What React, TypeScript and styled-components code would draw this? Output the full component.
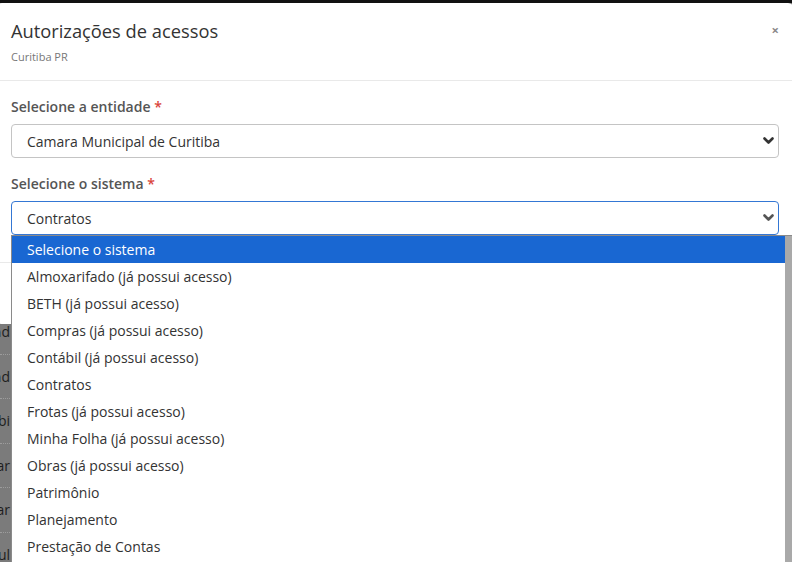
import styled, { createGlobalStyle } from "styled-components";

const sistemas = [
  "Selecione o sistema",
  "Almoxarifado (já possui acesso)",
  "BETH (já possui acesso)",
  "Compras (já possui acesso)",
  "Contábil (já possui acesso)",
  "Contratos",
  "Frotas (já possui acesso)",
  "Minha Folha (já possui acesso)",
  "Obras (já possui acesso)",
  "Patrimônio",
  "Planejamento",
  "Prestação de Contas",
];

const fundo = ["nd", "nd", "bi", "ar", "ar", "ul"];

const GlobalStyle = createGlobalStyle`
  * { box-sizing: border-box; }
  body {
    margin: 0;
    font-family: "Open Sans", "Liberation Sans", sans-serif;
    color: #333;
  }
`;

const Chevron = ({ color = "#333" }: { color?: string }) => (
  <svg width="11" height="8" viewBox="0 0 11 8">
    <polyline
      points="1.5,1.5 5.5,5.5 9.5,1.5"
      fill="none"
      stroke={color}
      strokeWidth="2.6"
      strokeLinecap="round"
      strokeLinejoin="round"
    />
  </svg>
);

const App = () => {
  return (
    <Page>
      <GlobalStyle />
      <TopBar />
      <Behind>
        {fundo.map((t, i) => (
          <BehindRow key={i}>
            <BehindCell>{t}</BehindCell>
          </BehindRow>
        ))}
      </Behind>

      <Modal>
        <Header>
          <HeaderText>
            <Title>Autorizações de acessos</Title>
            <Subtitle>Curitiba PR</Subtitle>
          </HeaderText>
          <Close>×</Close>
        </Header>
        <Body>
          <Group>
            <Label>
              Selecione a entidade <Req>*</Req>
            </Label>
            <Select>
              <span>Camara Municipal de Curitiba</span>
              <Chevron />
            </Select>
          </Group>
          <Group $last>
            <Label>
              Selecione o sistema <Req>*</Req>
            </Label>
            <Select $focused>
              <span>Contratos</span>
              <Chevron color="#555" />
            </Select>
          </Group>
        </Body>
        <Footer>
          <Button>Cancelar</Button>
          <Button $primary>Salvar</Button>
        </Footer>
      </Modal>

      <Options>
        <OptionList>
          {sistemas.map((s, i) => (
            <Option key={s} $active={i === 0}>
              {s}
            </Option>
          ))}
        </OptionList>
        <ScrollTrack />
      </Options>
    </Page>
  );
};

const Page = styled.div`
  position: relative;
  width: 792px;
  height: 562px;
  overflow: hidden;
  background: #7b7b7b;
`;

const TopBar = styled.div`
  height: 3px;
  background: #111;
`;

const Behind = styled.div`
  padding-top: 307px;
`;

const BehindRow = styled.div`
  height: 44.5px;
  display: flex;
  align-items: center;
  border-bottom: 1px dotted #9c9c9c;
`;

/* the table cell ends just left of the open option list */
const BehindCell = styled.div`
  width: 10px;
  display: flex;
  justify-content: flex-end;
  font-size: 14px;
  color: #1e1e1e;
  white-space: nowrap;
`;

const Modal = styled.div`
  position: absolute;
  top: 3px;
  left: -4px;
  width: 798px;
  background: #fff;
  border-radius: 6px;
`;

const Header = styled.div`
  display: flex;
  justify-content: space-between;
  align-items: flex-start;
  padding: 15px;
  border-bottom: 1px solid #e9e9e9;
`;

const HeaderText = styled.div`
  display: flex;
  flex-direction: column;
  gap: 5px;
`;

const Title = styled.h4`
  margin: 0;
  font-size: 18.3px;
  font-weight: 400;
  line-height: 26px;
  color: #333;
`;

const Subtitle = styled.small`
  font-size: 11px;
  line-height: 16px;
  color: #777;
`;

const Close = styled.span`
  margin-top: 2px;
  font-size: 13px;
  font-weight: 700;
  line-height: 20px;
  color: #8a8a8a;
`;

const Body = styled.div`
  padding: 16px 15px 27px;
`;

const Group = styled.div<{ $last?: boolean }>`
  display: flex;
  flex-direction: column;
  gap: 7px;
  margin-bottom: ${(p) => (p.$last ? "0" : "16px")};
`;

const Label = styled.label`
  font-size: 14px;
  font-weight: 600;
  line-height: 20px;
  color: #555;
`;

const Req = styled.span`
  color: #d9443a;
`;

const Select = styled.div<{ $focused?: boolean }>`
  height: 34px;
  display: flex;
  align-items: center;
  justify-content: space-between;
  padding: 0 4px 0 15px;
  font-size: 14px;
  color: #333;
  border: 1px solid ${(p) => (p.$focused ? "#3477d4" : "#c4c4c4")};
  border-radius: 4px;
  background: #fff;
`;

const Footer = styled.div`
  display: flex;
  justify-content: flex-end;
  gap: 6px;
  padding: 15px;
  border-top: 1px solid #e9e9e9;
`;

const Button = styled.button<{ $primary?: boolean }>`
  height: 31px;
  padding: 0 12px;
  font-family: inherit;
  font-size: 14px;
  border-radius: 4px;
  border: 1px solid ${(p) => (p.$primary ? "#2e6da4" : "#ccc")};
  background: ${(p) => (p.$primary ? "#337ab7" : "#fff")};
  color: ${(p) => (p.$primary ? "#fff" : "#333")};
`;

const Options = styled.div`
  position: absolute;
  top: 235px;
  left: 11px;
  right: 0;
  bottom: 0;
  display: flex;
  background: #fff;
  border-top: 1px solid #8a8a8a;
  border-left: 1px solid #8a8a8a;
`;

const OptionList = styled.ul`
  flex: 1;
  margin: 0;
  padding: 0;
  list-style: none;
`;

const Option = styled.li<{ $active?: boolean }>`
  height: 27px;
  display: flex;
  align-items: center;
  padding-left: 15px;
  font-size: 14px;
  color: ${(p) => (p.$active ? "#fff" : "#333")};
  background: ${(p) => (p.$active ? "#1967d2" : "transparent")};
`;

const ScrollTrack = styled.div`
  width: 7px;
  background: #a9a9a9;
`;

export default App;
